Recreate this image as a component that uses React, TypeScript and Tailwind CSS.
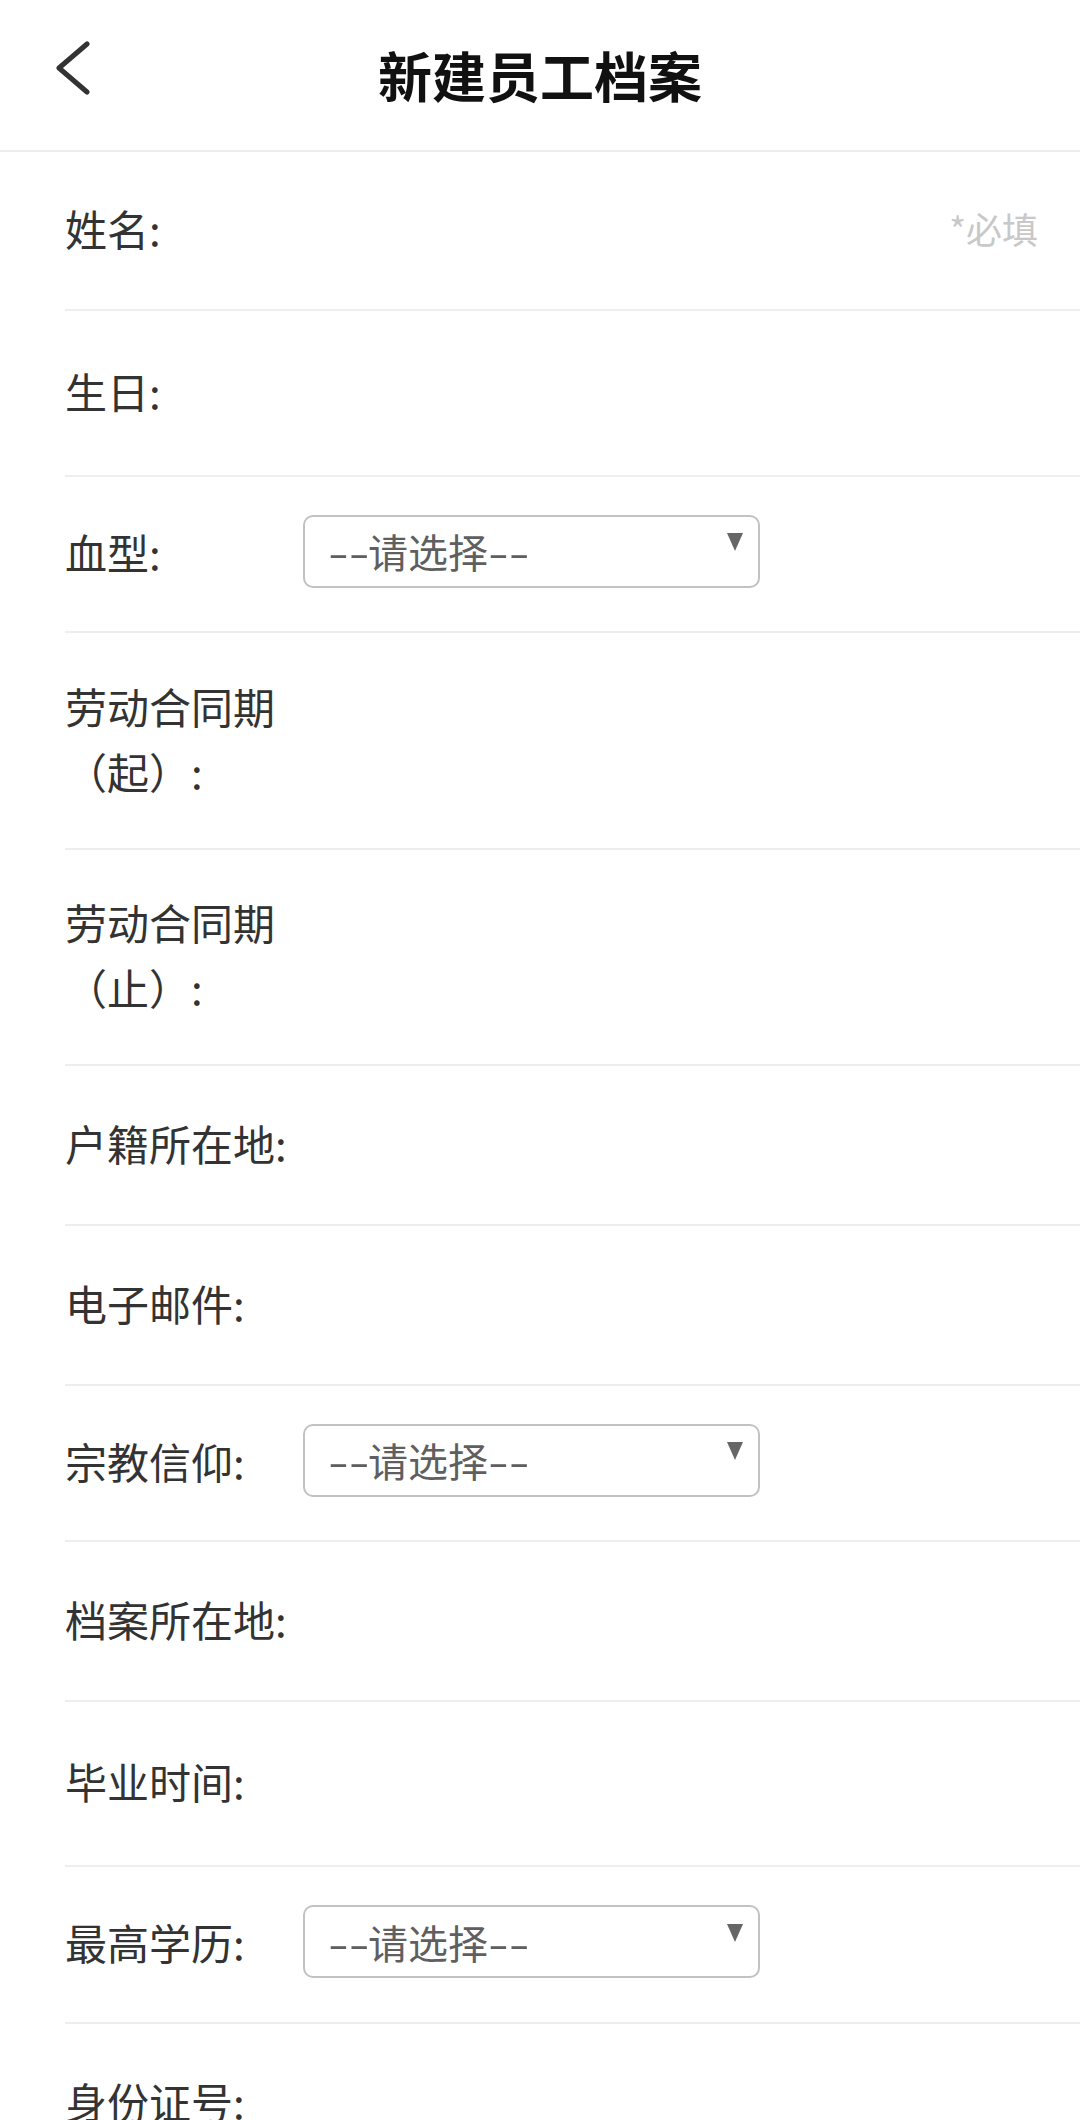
import React from "react";

type Row = {
  label: string;
  h: string;
  select?: boolean;
  required?: boolean;
};

const rows: Row[] = [
  { label: "姓名:", h: "h-[159px]", required: true },
  { label: "生日:", h: "h-[166px]" },
  { label: "血型:", h: "h-[156px]", select: true },
  { label: "劳动合同期（起）:", h: "h-[217px]" },
  { label: "劳动合同期（止）:", h: "h-[216px]" },
  { label: "户籍所在地:", h: "h-[160px]" },
  { label: "电子邮件:", h: "h-[160px]" },
  { label: "宗教信仰:", h: "h-[156px]", select: true },
  { label: "档案所在地:", h: "h-[160px]" },
  { label: "毕业时间:", h: "h-[165px]" },
  { label: "最高学历:", h: "h-[157px]", select: true },
  { label: "身份证号:", h: "h-[160px]" },
];

// the dashes in the reference are wider than the font's hyphen
const Dashes = () => (
  <span className="inline-block w-[40px]">
    <span className="inline-block origin-left scale-x-150">--</span>
  </span>
);

const SelectBox = () => (
  <div className="flex h-[73px] w-[457px] shrink-0 items-center justify-between rounded-[10px] border-2 border-[#c2c2c2] pl-[23px] pr-[15px]">
    <span className="text-[40px] leading-none text-[#5f5f5f]">
      <Dashes />
      请选择
      <Dashes />
    </span>
    <svg width="16" height="18" viewBox="0 0 16 18" className="mb-[18px]">
      <polygon points="0,0 16,0 8,18" fill="#666" />
    </svg>
  </div>
);

const App = () => {
  return (
    <div className="w-[1080px] min-h-[2120px] overflow-hidden bg-white font-['Noto_Sans_CJK_SC',sans-serif]">
      {/* header */}
      <div className="relative flex h-[152px] items-center justify-center border-b-2 border-[#eeeeee]">
        <button className="absolute left-[55px] top-[41px]">
          <svg width="38" height="54" viewBox="0 0 38 54">
            <polyline
              points="32,3 4,27 32,51"
              fill="none"
              stroke="#333"
              strokeWidth="5"
              strokeLinecap="round"
              strokeLinejoin="round"
            />
          </svg>
        </button>
        <h1 className="text-[54px] font-bold leading-none text-[#111]">新建员工档案</h1>
      </div>

      {/* form rows */}
      <div>
        {rows.map((row, i) => (
          <div
            key={i}
            className={`ml-[65px] flex items-center border-b-2 border-[#eeeeee] pb-[6px] ${row.h}`}
          >
            <div className="w-[238px] shrink-0 text-[42px] leading-[65px] text-[#333]">
              {row.label}
            </div>
            {row.select && <SelectBox />}
            {row.required && (
              <span className="ml-auto pr-[42px] text-[36px] text-[#c8c8c8]">*必填</span>
            )}
          </div>
        ))}
      </div>
    </div>
  );
};

export default App;
